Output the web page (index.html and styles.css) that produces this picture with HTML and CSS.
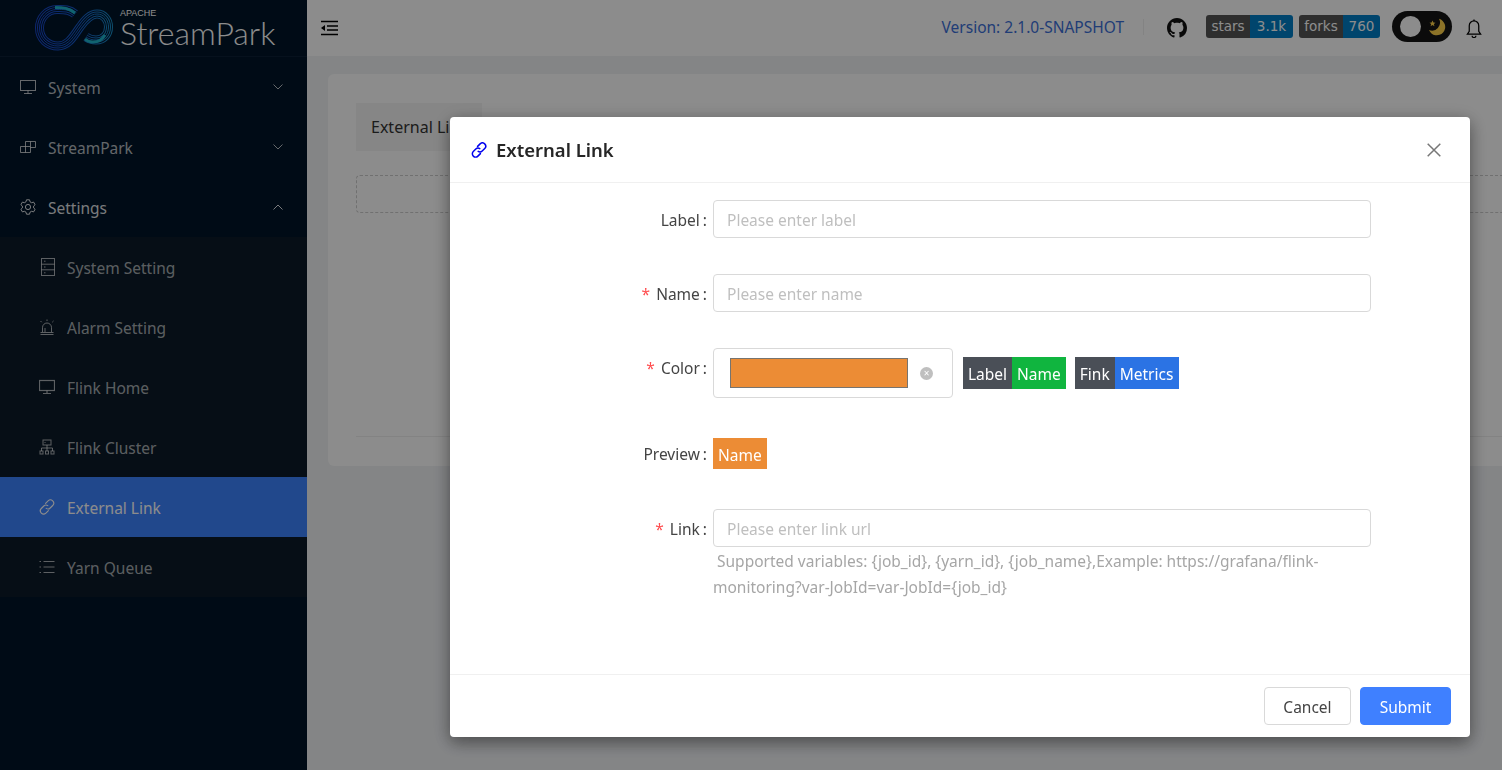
FILE: index.html
```html
<!DOCTYPE html>
<html lang="en">
<head>
  <meta charset="UTF-8">
  <meta name="viewport" content="width=device-width, initial-scale=1.0">
  <title>External Link</title>
  <link rel="stylesheet" href="styles.css">
</head>
<body>
  <div class="layout">
    <aside class="sidebar">
      <div class="logo">
        <svg class="logo-mark" width="78" height="46" viewBox="0 0 78 46" fill="none">
          <defs>
            <linearGradient id="band" gradientUnits="userSpaceOnUse" x1="0" y1="0" x2="78" y2="0">
              <stop offset="0" stop-color="#1a45c8"/>
              <stop offset="0.55" stop-color="#1658c8"/>
              <stop offset="1" stop-color="#1a90c8"/>
            </linearGradient>
            <path id="loop" d="M40 9C34 4 28 4.5 22 4.5C12 4.5 4.5 13 4.5 23C4.5 34 13 41 23 41C34 41 39 30 45 22C50 15 55 9 62 9C69 9 73.5 15 73.5 22C73.5 30 68 35 61 35C57 35 54 34 51 32"/>
          </defs>
          <use href="#loop" stroke="url(#band)" stroke-width="9"/>
          <use href="#loop" stroke="#001529" stroke-width="7"/>
          <use href="#loop" stroke="url(#band)" stroke-width="5"/>
          <use href="#loop" stroke="#001529" stroke-width="3"/>
          <use href="#loop" stroke="url(#band)" stroke-width="1"/>
          <path d="M40 8C34 3 28 2.500 20 2.500" stroke="#1fb4cc" stroke-width="3"/>
          <path d="M70 30C67 35 63 37 58 37C55 37 52 36 50 34" stroke="#1fb4cc" stroke-width="3"/>
        </svg>
        <div class="logo-text">
          <span class="logo-apache">APACHE</span>
          <span class="logo-name">StreamPark</span>
        </div>
      </div>

      <nav class="menu">
        <div class="menu-item">
          <svg class="menu-icon" viewBox="0 0 16 16" fill="none" stroke="currentColor" stroke-width="1"><rect x="0.5" y="1.5" width="15" height="10"/><path d="M8 11.5v3M4 14.5h8"/></svg>
          <span class="menu-text">System</span>
          <svg class="arrow" viewBox="0 0 10 6" fill="none" stroke="currentColor" stroke-width="1"><path d="M0.5 0.5L5 5L9.5 0.5"/></svg>
        </div>
        <div class="menu-item">
          <svg class="menu-icon" viewBox="0 0 16 16" fill="none" stroke="currentColor" stroke-width="1"><path d="M5.5 2.5h10v6h-5M10.5 2.5v5M0.5 7.5h10v6h-10zM5.5 7.5v6M5.5 2.5v5"/></svg>
          <span class="menu-text">StreamPark</span>
          <svg class="arrow" viewBox="0 0 10 6" fill="none" stroke="currentColor" stroke-width="1"><path d="M0.5 0.5L5 5L9.5 0.5"/></svg>
        </div>
        <div class="menu-item open">
          <svg class="menu-icon" viewBox="0 0 16 16" fill="none" stroke="currentColor" stroke-width="1" stroke-linejoin="round"><path d="M6.5.8h3l.5 2 1.6.9 2-.6 1.5 2.6-1.5 1.4v1.8l1.5 1.4-1.5 2.6-2-.6-1.6.9-.5 2h-3l-.5-2-1.6-.9-2 .6L.9 10.3l1.5-1.4V7.1L.9 5.700l1.500-2.600 2 .6 1.600-.9z"/><circle cx="8" cy="8" r="2.6"/></svg>
          <span class="menu-text">Settings</span>
          <svg class="arrow" viewBox="0 0 10 6" fill="none" stroke="currentColor" stroke-width="1"><path d="M0.5 5.5L5 1L9.5 5.5"/></svg>
        </div>
        <div class="submenu">
          <div class="menu-item sub">
            <svg class="menu-icon tall" viewBox="0 0 14 18" fill="none" stroke="currentColor" stroke-width="1"><rect x="0.5" y="0.5" width="13" height="17"/><path d="M0.5 6.2h13M0.5 11.8h13M3 3.2h1.5M3 9h1.5M3 14.8h1.5"/></svg>
            <span class="menu-text">System Setting</span>
          </div>
          <div class="menu-item sub">
            <svg class="menu-icon" viewBox="0 0 16 16" fill="none" stroke="currentColor" stroke-width="1"><path d="M3.5 13V8.5a4.5 4.5 0 0 1 9 0V13M1.5 13.5h13M1.5 15.5h13M6 13V9M8 0.5v1.5M1.5 2l1.2 1.2M14.5 2l-1.2 1.2"/></svg>
            <span class="menu-text">Alarm Setting</span>
          </div>
          <div class="menu-item sub">
            <svg class="menu-icon" viewBox="0 0 16 16" fill="none" stroke="currentColor" stroke-width="1.2"><rect x="0.5" y="1.5" width="15" height="10"/><path d="M8 11.5v3M4 14.5h8"/></svg>
            <span class="menu-text">Flink Home</span>
          </div>
          <div class="menu-item sub">
            <svg class="menu-icon" viewBox="0 0 16 16" fill="none" stroke="currentColor" stroke-width="1"><rect x="4" y="1" width="8" height="5"/><path d="M8 6v3M2.5 12V9h11v3M8 9v3M5.5 3.5h1"/><rect x="1" y="12" width="3" height="3"/><rect x="6.5" y="12" width="3" height="3"/><rect x="12" y="12" width="3" height="3"/></svg>
            <span class="menu-text">Flink Cluster</span>
          </div>
          <div class="menu-item sub active">
            <svg class="menu-icon" viewBox="0 0 16 16" fill="none" stroke="currentColor" stroke-width="1.1" stroke-linecap="round"><path d="M6.6 4.4l2.5-2.5a3.2 3.2 0 0 1 4.6 4.6l-2.5 2.5a3.2 3.2 0 0 1-4 .4"/><path d="M9.4 11.6l-2.5 2.5a3.2 3.2 0 0 1-4.6-4.6l2.5-2.5a3.2 3.2 0 0 1 4-.4"/></svg>
            <span class="menu-text">External Link</span>
          </div>
          <div class="menu-item sub">
            <svg class="menu-icon" viewBox="0 0 16 16" fill="none" stroke="currentColor" stroke-width="1"><path d="M4.5 2.5h11M4.5 8h11M4.5 13.5h11M0.5 2.5h1.5M0.5 8h1.5M0.5 13.5h1.5"/></svg>
            <span class="menu-text">Yarn Queue</span>
          </div>
        </div>
      </nav>
    </aside>

    <div class="main">
      <header class="topbar">
        <svg class="collapse" viewBox="0 0 18 16" fill="none" stroke="currentColor" stroke-width="1.6"><path d="M1 1.5h17M7 6h11M7 10h11M1 14.5h17"/><path d="M5 5v6L1 8z" fill="currentColor" stroke="none"/></svg>
        <div class="topbar-right">
          <span class="version">Version: 2.1.0-SNAPSHOT</span>
          <span class="divider"></span>
          <svg class="github" viewBox="0 0 16 16" fill="currentColor"><path d="M8 0C3.58 0 0 3.58 0 8c0 3.54 2.29 6.53 5.47 7.59.4.07.55-.17.55-.38 0-.19-.01-.82-.01-1.49-2.01.37-2.53-.49-2.69-.94-.09-.23-.48-.94-.82-1.13-.28-.15-.68-.52-.01-.53.63-.01 1.08.58 1.23.82.72 1.21 1.87.87 2.33.66.07-.52.28-.87.51-1.07-1.78-.2-3.64-.89-3.64-3.95 0-.87.31-1.59.82-2.15-.08-.2-.36-1.02.08-2.12 0 0 .67-.21 2.2.82.64-.18 1.32-.27 2-.27s1.36.09 2 .27c1.53-1.04 2.2-.82 2.2-.82.44 1.1.16 1.92.08 2.12.51.56.82 1.27.82 2.15 0 3.07-1.87 3.75-3.65 3.95.29.25.54.73.54 1.48 0 1.07-.01 1.93-.01 2.2 0 .21.15.46.55.38A8.01 8.01 0 0 0 16 8c0-4.42-3.58-8-8-8z"/></svg>
          <span class="shield"><span class="shield-key">stars</span><span class="shield-val">3.1k</span></span>
          <span class="shield"><span class="shield-key">forks</span><span class="shield-val forks">760</span></span>
          <span class="theme-toggle">
            <span class="knob"></span>
            <svg class="moon" viewBox="0 0 18 18"><path d="M11 .8a8.4 8.4 0 1 1-10 11.2a8 8 0 0 0 10-11.2z" fill="#ffd24a"/><path d="M4.5 2.5l.9 2 2.1.2-1.6 1.4.5 2.1-1.900-1.100-1.900 1.100.5-2.100-1.600-1.400 2.100-.2z" fill="#ffd24a"/></svg>
          </span>
          <svg class="bell" viewBox="0 0 16 20" fill="none" stroke="currentColor" stroke-width="1.3"><path d="M8 2a5 5 0 0 0-5 5v6l-2 3h14l-2-3V7a5 5 0 0 0-5-5z"/><path d="M8 .6V2M6 17.5a2 2 0 0 0 4 0"/></svg>
        </div>
      </header>

      <main class="content">
        <section class="card">
          <div class="tab">External Link</div>
          <div class="add-box"></div>
          <div class="card-line"></div>
        </section>
      </main>
    </div>
  </div>

  <div class="mask"></div>

  <div class="modal">
    <div class="modal-header">
      <svg class="title-icon" viewBox="0 0 16 16" fill="none" stroke="#0000ee" stroke-width="1.5" stroke-linecap="round"><path d="M6.6 4.4l2.5-2.5a3.2 3.2 0 0 1 4.6 4.6l-2.5 2.5a3.2 3.2 0 0 1-4 .4"/><path d="M9.4 11.6l-2.5 2.5a3.2 3.2 0 0 1-4.6-4.6l2.5-2.5a3.2 3.2 0 0 1 4-.4"/></svg>
      <span class="modal-title">External Link</span>
      <svg class="close" viewBox="0 0 14 14" fill="none" stroke="currentColor" stroke-width="1.5"><path d="M.7.7l12.6 12.6M13.3.7L.7 13.3"/></svg>
    </div>

    <div class="modal-body">
      <div class="form-item">
        <label class="form-label">Label</label>
        <input class="input" type="text" placeholder="Please enter label">
      </div>
      <div class="form-item">
        <label class="form-label required">Name</label>
        <input class="input" type="text" placeholder="Please enter name">
      </div>
      <div class="form-item gap-large">
        <label class="form-label required">Color</label>
        <div class="color-row">
          <div class="color-picker">
            <span class="color-swatch"></span>
            <span class="color-clear">×</span>
          </div>
          <span class="badge"><span class="badge-key">Label</span><span class="badge-val green">Name</span></span>
          <span class="badge"><span class="badge-key">Fink</span><span class="badge-val blue">Metrics</span></span>
        </div>
      </div>
      <div class="form-item gap-large">
        <label class="form-label preview-label">Preview</label>
        <div><span class="badge-val orange">Name</span></div>
      </div>
      <div class="form-item">
        <label class="form-label required">Link</label>
        <div>
          <input class="input" type="text" placeholder="Please enter link url">
          <p class="help">&nbsp;Supported variables: {job_id}, {yarn_id}, {job_name},Example: https://grafana/flink-monitoring?var-JobId=var-JobId={job_id}</p>
        </div>
      </div>
    </div>

    <div class="modal-footer">
      <button class="btn">Cancel</button>
      <button class="btn primary">Submit</button>
    </div>
  </div>
</body>
</html>
```

FILE: styles.css
```css
* {
  box-sizing: border-box;
}
html, body {
  height: 100%;
}
body {
  margin: 0;
  font-family: "Noto Sans", "Open Sans", sans-serif;
  font-size: 15.5px;
  color: #333;
  background-color: #f0f2f5;
  overflow: hidden;
}
.layout {
  display: flex;
  height: 770px;
}

/* sidebar */
.sidebar {
  width: 307px;
  flex-shrink: 0;
  background: #001529;
  color: rgba(255, 255, 255, 0.65);
}
.logo {
  height: 57px;
  display: flex;
  align-items: center;
  padding-left: 35px;
  border-bottom: 1px solid #0b2035;
}
.logo-mark {
  flex-shrink: 0;
}
.logo-text {
  display: flex;
  flex-direction: column;
  margin-left: 7px;
  color: #fff;
}
.logo-apache {
  font-family: "Liberation Sans", sans-serif;
  font-size: 9px;
  line-height: 10px;
}
.logo-name {
  font-family: "Lato", sans-serif;
  font-weight: 300;
  font-size: 32px;
  line-height: 30px;
}
.menu-item {
  height: 60px;
  display: flex;
  align-items: center;
  padding: 0 24px 0 20px;
  color: rgba(255, 255, 255, 0.72);
}
.menu-item.open {
  color: rgba(255, 255, 255, 0.88);
}
.menu-item.sub {
  padding-left: 39px;
  color: rgba(255, 255, 255, 0.65);
}
.menu-item.active {
  background: #3d83ff;
  color: #fff;
}
.menu-icon {
  width: 16px;
  height: 16px;
  flex-shrink: 0;
  margin-right: 12px;
}
.menu-icon.tall {
  width: 14px;
  height: 18px;
  margin-left: 2px;
  margin-right: 12px;
}
.menu-text {
  flex: 1;
  padding-top: 2px;
}
.arrow {
  width: 10px;
  height: 6px;
}
.submenu {
  background: #0c1b29;
}

/* top bar */
.main {
  flex: 1;
  min-width: 0;
  overflow: hidden;
}
.topbar {
  height: 56px;
  background: #fff;
  display: flex;
  align-items: center;
  justify-content: space-between;
  padding: 0 20px 0 13px;
}
.collapse {
  width: 18px;
  height: 16px;
  color: #000;
}
.topbar-right {
  display: flex;
  align-items: center;
  margin-bottom: 3px;
}
.version {
  color: #3b6fd8;
  margin-top: 1px;
  margin-right: 19px;
}
.divider {
  width: 1px;
  height: 16px;
  background: #eee;
  margin-right: 23px;
}
.github {
  width: 20px;
  height: 20px;
  color: #111;
  margin-top: 2px;
  margin-right: 19px;
}
.shield {
  display: flex;
  font-family: "DejaVu Sans", sans-serif;
  font-size: 13.5px;
  line-height: 23px;
  height: 23px;
  border-radius: 3px;
  overflow: hidden;
  margin-right: 6px;
  color: #fff;
  text-align: center;
}
.shield-key {
  width: 44px;
  background: #555;
}
.shield-val {
  width: 43px;
  background: #007ec6;
}
.shield-val.forks {
  width: 37px;
}
.theme-toggle {
  width: 60px;
  height: 31px;
  margin-left: 6px;
  margin-right: 14px;
  border-radius: 16px;
  background: #151515;
  display: flex;
  align-items: center;
  padding: 0 6px 0 8px;
  justify-content: space-between;
}
.knob {
  width: 21px;
  height: 21px;
  border-radius: 50%;
  background: #fff;
}
.moon {
  width: 18px;
  height: 18px;
}
.bell {
  width: 16px;
  height: 19px;
  color: #000;
  margin-top: 4px;
}

/* page behind the dialog */
.content {
  padding: 18px 0 0 21px;
}
.card {
  height: 392px;
  margin-right: -20px;
  background: #fff;
  border-radius: 6px;
  padding: 29px 0 0 28px;
}
.tab {
  width: 126px;
  height: 48px;
  line-height: 48px;
  padding-left: 15px;
  font-size: 16px;
  background: #f5f5f5;
  white-space: nowrap;
  overflow: hidden;
}
.add-box {
  height: 38px;
  margin-top: 24px;
  border: 1px dashed #ccc;
  border-radius: 4px;
}
.card-line {
  height: 1px;
  margin-top: 223px;
  background: #eee;
}

.mask {
  position: fixed;
  top: 0;
  left: 0;
  right: 0;
  bottom: 0;
  background: rgba(0, 0, 0, 0.45);
}

/* dialog */
.modal {
  position: fixed;
  left: 450px;
  top: 117px;
  width: 1020px;
  height: 620px;
  background: #fff;
  border-radius: 4px;
  box-shadow: 0 6px 16px rgba(0, 0, 0, 0.3), 0 3px 20px rgba(0, 0, 0, 0.2);
  display: flex;
  flex-direction: column;
}
.modal-header {
  height: 66px;
  display: flex;
  align-items: center;
  padding: 0 29px 0 21px;
  border-bottom: 1px solid #f0f0f0;
}
.title-icon {
  width: 16px;
  height: 16px;
  margin-right: 9px;
}
.modal-title {
  flex: 1;
  font-size: 18.5px;
  font-weight: 600;
  color: #262626;
}
.close {
  width: 14px;
  height: 14px;
  color: #777;
}
.modal-body {
  flex: 1;
  padding-top: 17px;
}
.form-item {
  display: grid;
  grid-template-columns: 263px 658px;
  margin-bottom: 36px;
}
.form-item.gap-large {
  margin-bottom: 40px;
}
.form-label {
  height: 38px;
  line-height: 40px;
  text-align: right;
  padding-right: 6px;
  color: #444;
}
.form-label::after {
  content: ":";
  margin-left: 3px;
}
.form-label.required::before {
  content: "*";
  color: #ff4d4f;
  margin-right: 6px;
}
.preview-label {
  height: 31px;
  line-height: 32px;
}
.input {
  display: block;
  width: 100%;
  height: 38px;
  padding: 1px 13px 0;
  font: inherit;
  color: #333;
  border: 1px solid #d9d9d9;
  border-radius: 4px;
  outline: none;
}
.input::placeholder {
  color: #bfbfbf;
}
.color-row {
  display: flex;
  align-items: center;
}
.color-picker {
  width: 240px;
  height: 50px;
  border: 1px solid #d9d9d9;
  border-radius: 4px;
  display: flex;
  align-items: center;
  padding-left: 16px;
  margin-right: 10px;
}
.color-swatch {
  width: 178px;
  height: 30px;
  background: #ec8c35;
  border: 1px solid #77746f;
}
.color-clear {
  width: 13px;
  height: 13px;
  margin-left: 12px;
  border-radius: 50%;
  background: #bfbfbf;
  color: #fff;
  font-size: 10px;
  line-height: 13px;
  text-align: center;
}
.badge {
  display: flex;
  margin-right: 9px;
  color: #fff;
  height: 32px;
  line-height: 34px;
}
.badge-key {
  background: #4a4f57;
  padding: 0 5px;
}
.badge-val {
  display: inline-block;
  padding: 0 5px;
  color: #fff;
}
.green {
  background: #10b53f;
}
.blue {
  padding-right: 6px;
  background: #2b73e4;
}
.orange {
  display: block;
  width: 54px;
  height: 31px;
  line-height: 34px;
  background: #ec8c35;
}
.help {
  margin: 1px 0 0;
  line-height: 26px;
  color: #a6a6a6;
}
.modal-footer {
  height: 63px;
  display: flex;
  justify-content: flex-end;
  align-items: center;
  gap: 9px;
  padding: 0 19px 1px 0;
  border-top: 1px solid #f0f0f0;
}
.btn {
  width: 87px;
  height: 38px;
  padding: 2px 0 0;
  font: inherit;
  color: #444;
  background: #fff;
  border: 1px solid #d9d9d9;
  border-radius: 4px;
}
.btn.primary {
  width: 91px;
  color: #fff;
  background: #3f80ff;
  border-color: #3f80ff;
}
```
